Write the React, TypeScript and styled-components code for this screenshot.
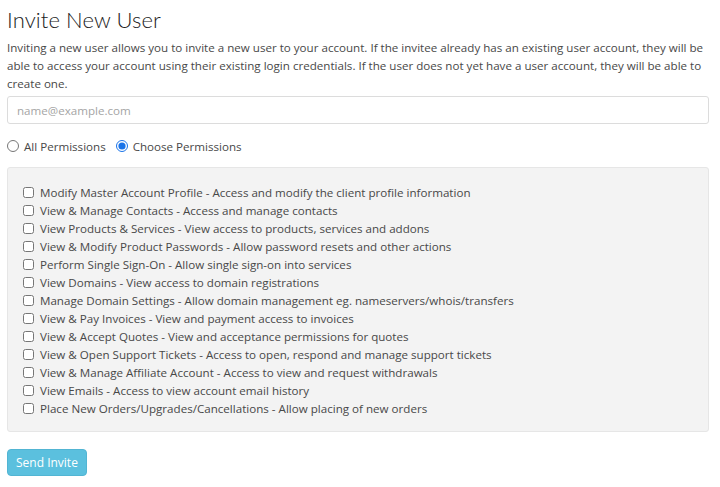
import styled, { createGlobalStyle } from "styled-components";

const GlobalStyle = createGlobalStyle`
  body {
    margin: 0;
    background: #fff;
    font-family: "Open Sans", "Liberation Sans", sans-serif;
    font-size: 11.6px;
    color: #484848;
  }
`;

const Container = styled.div`
  width: 702px;
  padding: 0 11px 0 7px;
`;

const Title = styled.h1`
  font-family: Lato, "Open Sans", sans-serif;
  font-weight: 300;
  font-size: 22px;
  letter-spacing: 0.1px;
  color: #222;
  margin: 0;
  padding-top: 3px;
  line-height: 33px;
`;

const Description = styled.p`
  margin: 3px 0 0;
  line-height: 18px;
`;

const EmailInput = styled.input`
  display: block;
  box-sizing: border-box;
  width: 100%;
  height: 28px;
  margin-top: 3px;
  padding: 0 9px;
  border: 1px solid #dcdcdc;
  border-radius: 3px;
  font-family: inherit;
  font-size: 11.6px;
  color: #444;
  &::placeholder {
    color: #a5a5a5;
  }
`;

const RadioRow = styled.div`
  display: flex;
  align-items: center;
  gap: 10px;
  margin-top: 13px;
  height: 18px;
`;

const Option = styled.label`
  display: flex;
  align-items: center;
  gap: 5px;
  cursor: pointer;
`;

const Radio = styled.input`
  margin: 0;
  width: 12px;
  height: 12px;
  accent-color: #1a73e8;
`;

const Well = styled.div`
  margin-top: 12px;
  box-sizing: border-box;
  height: 265px;
  padding: 15px 15px;
  background: #f3f3f3;
  border: 1px solid #e6e6e6;
  border-radius: 3px;
`;

const CheckRow = styled.label`
  display: flex;
  align-items: center;
  gap: 6px;
  height: 18px;
  cursor: pointer;
`;

const Check = styled.input`
  margin: 0;
  width: 11px;
  height: 11px;
`;

const SendButton = styled.button`
  display: block;
  margin-top: 17px;
  height: 27px;
  padding: 0 8px;
  background: #5bc0de;
  border: 1px solid #52b5d3;
  border-radius: 4px;
  color: #fff;
  font-family: inherit;
  font-size: 12px;
  cursor: pointer;
`;

const permissions = [
  "Modify Master Account Profile - Access and modify the client profile information",
  "View & Manage Contacts - Access and manage contacts",
  "View Products & Services - View access to products, services and addons",
  "View & Modify Product Passwords - Allow password resets and other actions",
  "Perform Single Sign-On - Allow single sign-on into services",
  "View Domains - View access to domain registrations",
  "Manage Domain Settings - Allow domain management eg. nameservers/whois/transfers",
  "View & Pay Invoices - View and payment access to invoices",
  "View & Accept Quotes - View and acceptance permissions for quotes",
  "View & Open Support Tickets - Access to open, respond and manage support tickets",
  "View & Manage Affiliate Account - Access to view and request withdrawals",
  "View Emails - Access to view account email history",
  "Place New Orders/Upgrades/Cancellations - Allow placing of new orders",
];

export default function App() {
  return (
    <Container>
      <GlobalStyle />
      <Title>Invite New User</Title>
      <Description>
        Inviting a new user allows you to invite a new user to your account. If
        the invitee already has an existing user account, they will be able to
        access your account using their existing login credentials. If the user
        does not yet have a user account, they will be able to create one.
      </Description>
      <EmailInput type="email" placeholder="name@example.com" />
      <RadioRow>
        <Option>
          <Radio type="radio" name="perm" />
          All Permissions
        </Option>
        <Option>
          <Radio type="radio" name="perm" defaultChecked />
          Choose Permissions
        </Option>
      </RadioRow>
      <Well>
        {permissions.map((p) => (
          <CheckRow key={p}>
            <Check type="checkbox" />
            {p}
          </CheckRow>
        ))}
      </Well>
      <SendButton>Send Invite</SendButton>
    </Container>
  );
}
